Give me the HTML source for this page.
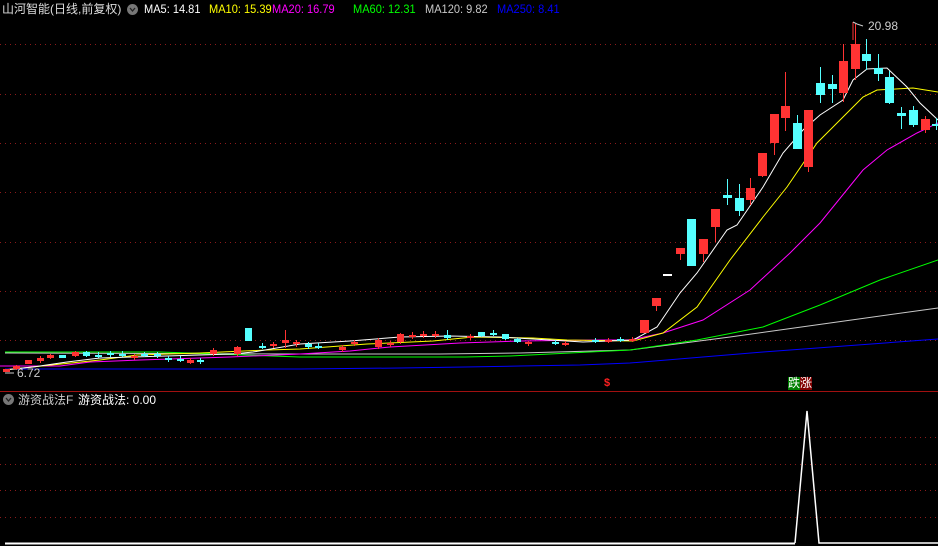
<!DOCTYPE html>
<html><head><meta charset="utf-8"><style>
html,body{margin:0;padding:0;background:#000;width:938px;height:546px;overflow:hidden}
.t{position:absolute;font-family:"Liberation Sans","Noto Sans CJK SC",sans-serif;font-size:12px;white-space:nowrap;line-height:14px}
.m{font-size:12px;transform:scaleX(0.92);transform-origin:0 0}
.ic{position:absolute;width:11px;height:11px;border-radius:50%;background:#777}
.ic svg{position:absolute;left:0;top:0}
</style></head><body>
<svg width="938" height="546" style="position:absolute;left:0;top:0" shape-rendering="crispEdges">
<g stroke="#8b1a1a" stroke-width="1" stroke-dasharray="1,4">
<line x1="0" y1="44.5" x2="938" y2="44.5"/><line x1="0" y1="94.5" x2="938" y2="94.5"/>
<line x1="0" y1="143.5" x2="938" y2="143.5"/><line x1="0" y1="192.5" x2="938" y2="192.5"/>
<line x1="0" y1="242.5" x2="938" y2="242.5"/><line x1="0" y1="291.5" x2="938" y2="291.5"/>
<line x1="0" y1="340.5" x2="938" y2="340.5"/>
<line x1="0" y1="437.5" x2="938" y2="437.5"/><line x1="0" y1="464.5" x2="938" y2="464.5"/>
<line x1="0" y1="490.5" x2="938" y2="490.5"/><line x1="0" y1="517.5" x2="938" y2="517.5"/>
</g>
<line x1="0" y1="391.5" x2="938" y2="391.5" stroke="#a01010"/>
<g fill="none" stroke-width="1" shape-rendering="auto">
<polyline stroke="#0000ff" points="5,369 300,369 400,368 465,367 520,366 580,365 630,363 763,352 938,339"/>
<polyline stroke="#c8c8c8" points="5,353 300,354 440,354 520,353 630,350 730,337 830,323 938,308"/>
<polyline stroke="#00ff00" points="5,352 160,352 300,357 465,357 510,356 630,350 697,340 763,327 820,305 880,280 938,260"/>
<polyline stroke="#ff00ff" points="0,366 60,366 90,362 140,360 230,357 300,354 350,351 390,347 460,343 520,341 600,340 630,340 663,333 703,320 750,290 790,253 820,223 863,170 887,150 917,133 938,123"/>
<polyline stroke="#ffff00" points="5,370 32,367 100,360 137,355 200,353 267,350 300,349 367,344 433,341 473,337 533,338 567,340 633,341 663,333 697,307 730,260 763,217 787,187 817,143 843,117 863,97 877,90 913,88 938,92"/>
<polyline stroke="#ffffff" points="3,370 33,367 67,362 100,358 133,357 233,354 253,352 300,344 350,341 400,337 450,336 500,337 533,339 583,342 633,340 657,327 680,293 697,273 727,230 737,225 763,187 783,153 803,130 820,115 843,100 853,80 867,69 887,68 907,87 920,103 938,120"/>
</g>
<g id="c"></g>
<line x1="5" y1="543.5" x2="795" y2="543.5" stroke="#fff" stroke-width="2"/>
<polyline points="795,543 807,411 819,543 938,543" fill="none" stroke="#fff" stroke-width="1.5" shape-rendering="auto"/>
<line x1="853" y1="22" x2="853" y2="40" stroke="#ff3333"/>
<polyline points="853,22 857,24 863,26" fill="none" stroke="#ccc" shape-rendering="auto"/>
<line x1="5" y1="373" x2="14" y2="373" stroke="#ccc"/>
<rect x="788" y="377" width="12" height="13" fill="#008000"/><rect x="800" y="377" width="12" height="13" fill="#800000"/>
</svg>
<script>
var R="#ff3333",C="#55ffff",g=document.getElementById('c'),s='';
var d=[
[6,369,372,369,372,R],[16,366,369,365,370,R],[28,360,364,360,364,R],[40,358,361,356,363,R],[50,355,358,354,359,R],[62,355,358,355,358,C],[75,352,356,351,357,R],[86,352,356,351,357,C],[98,355,356,352,358,C],[110,353,355,351,357,C],[122,354,355,351,357,C],[134,356,358,354,360,R],[144,354,355,352,357,C],[157,354,356,352,358,C],[168,358,360,356,362,C],[180,359,360,356,362,C],[190,360,363,358,364,R],[200,360,362,358,364,C],[213,350,354,348,356,R],[237,347,354,346,356,R],[248,328,341,328,341,C],[262,346,347,343,349,C],[273,344,346,342,348,R],[285,340,343,330,348,R],[296,342,344,340,347,R],[308,344,347,342,349,C],[318,346,347,343,349,C],[342,347,350,345,352,R],[354,342,344,340,346,R],[378,340,347,338,349,R],[390,343,345,341,347,R],[400,334,342,333,344,R],[412,335,337,332,339,R],[423,334,336,331,338,R],[435,334,336,331,338,R],[447,335,338,330,340,C],[470,336,338,334,340,R],[481,332,336,332,337,C],[493,333,334,330,336,C],[505,334,339,334,340,C],[517,339,342,338,343,C],[528,342,344,341,346,R],[555,342,343,340,345,C],[565,343,344,341,346,R],[595,340,341,338,343,C],[608,340,342,338,343,R],[620,339,340,337,342,C],[632,339,340,337,342,R],
[644,320,333,320,333,R],[656,298,306,298,311,R],[667,274,275,274,275,"#fff"],[680,248,254,248,260,R],[691,219,266,219,266,C],[703,239,254,239,262,R],[715,209,227,209,242,R],[727,195,198,179,205,C],[739,198,211,184,216,C],[750,188,200,178,205,R],[762,153,176,153,177,R],[774,114,143,114,155,R],[785,106,118,72,131,R],[797,123,149,115,149,C],[808,110,167,110,172,R],[820,83,95,67,103,C],[832,84,89,75,103,C],[843,61,93,44,102,R],[855,44,69,24,80,R],[866,54,61,39,70,C],[878,68,74,54,81,C],[889,77,103,71,104,C],[901,113,116,107,129,C],[913,110,125,106,127,C],[925,119,130,116,133,R],[936,124,126,118,130,C]];
d.forEach(function(a){var x=a[0],w=x<640?7:9,h=(w-1)/2;s+='<line x1="'+(x+.5)+'" y1="'+a[3]+'" x2="'+(x+.5)+'" y2="'+a[4]+'" stroke="'+a[5]+'"/>';s+='<rect x="'+(x-h)+'" y="'+a[1]+'" width="'+w+'" height="'+Math.max(2,a[2]-a[1])+'" fill="'+a[5]+'"/>';});
g.innerHTML=s;
</script>
<div class="t" style="left:2px;top:2px;color:#ddd">山河智能(日线,前复权)</div>
<div class="ic" style="left:127px;top:4px"><svg width="11" height="11"><polyline points="3,4 5.5,7 8,4" fill="none" stroke="#222" stroke-width="1.3"/></svg></div>
<div class="t m" style="left:144px;top:2px;color:#fff">MA5: 14.81</div>
<div class="t m" style="left:209px;top:2px;color:#ffff00">MA10: 15.39</div>
<div class="t m" style="left:272px;top:2px;color:#ff00ff">MA20: 16.79</div>
<div class="t m" style="left:353px;top:2px;color:#00ff00">MA60: 12.31</div>
<div class="t m" style="left:425px;top:2px;color:#c8c8c8">MA120: 9.82</div>
<div class="t m" style="left:497px;top:2px;color:#0000ff">MA250: 8.41</div>
<div class="t" style="left:868px;top:19px;color:#ccc">20.98</div>
<div class="t" style="left:17px;top:366px;color:#ccc">6.72</div>
<div class="t" style="left:604px;top:376px;color:#ff2020;font-size:11px;font-weight:bold">$</div>
<div class="t" style="left:788px;top:376px;color:#fff;font-size:12px">跌涨</div>
<div class="ic" style="left:3px;top:394px"><svg width="11" height="11"><polyline points="3,4 5.5,7 8,4" fill="none" stroke="#222" stroke-width="1.3"/></svg></div>
<div class="t" style="left:18px;top:393px;color:#ccc">游资战法F</div>
<div class="t" style="left:78px;top:393px;color:#fff">游资战法: 0.00</div>
</body></html>
